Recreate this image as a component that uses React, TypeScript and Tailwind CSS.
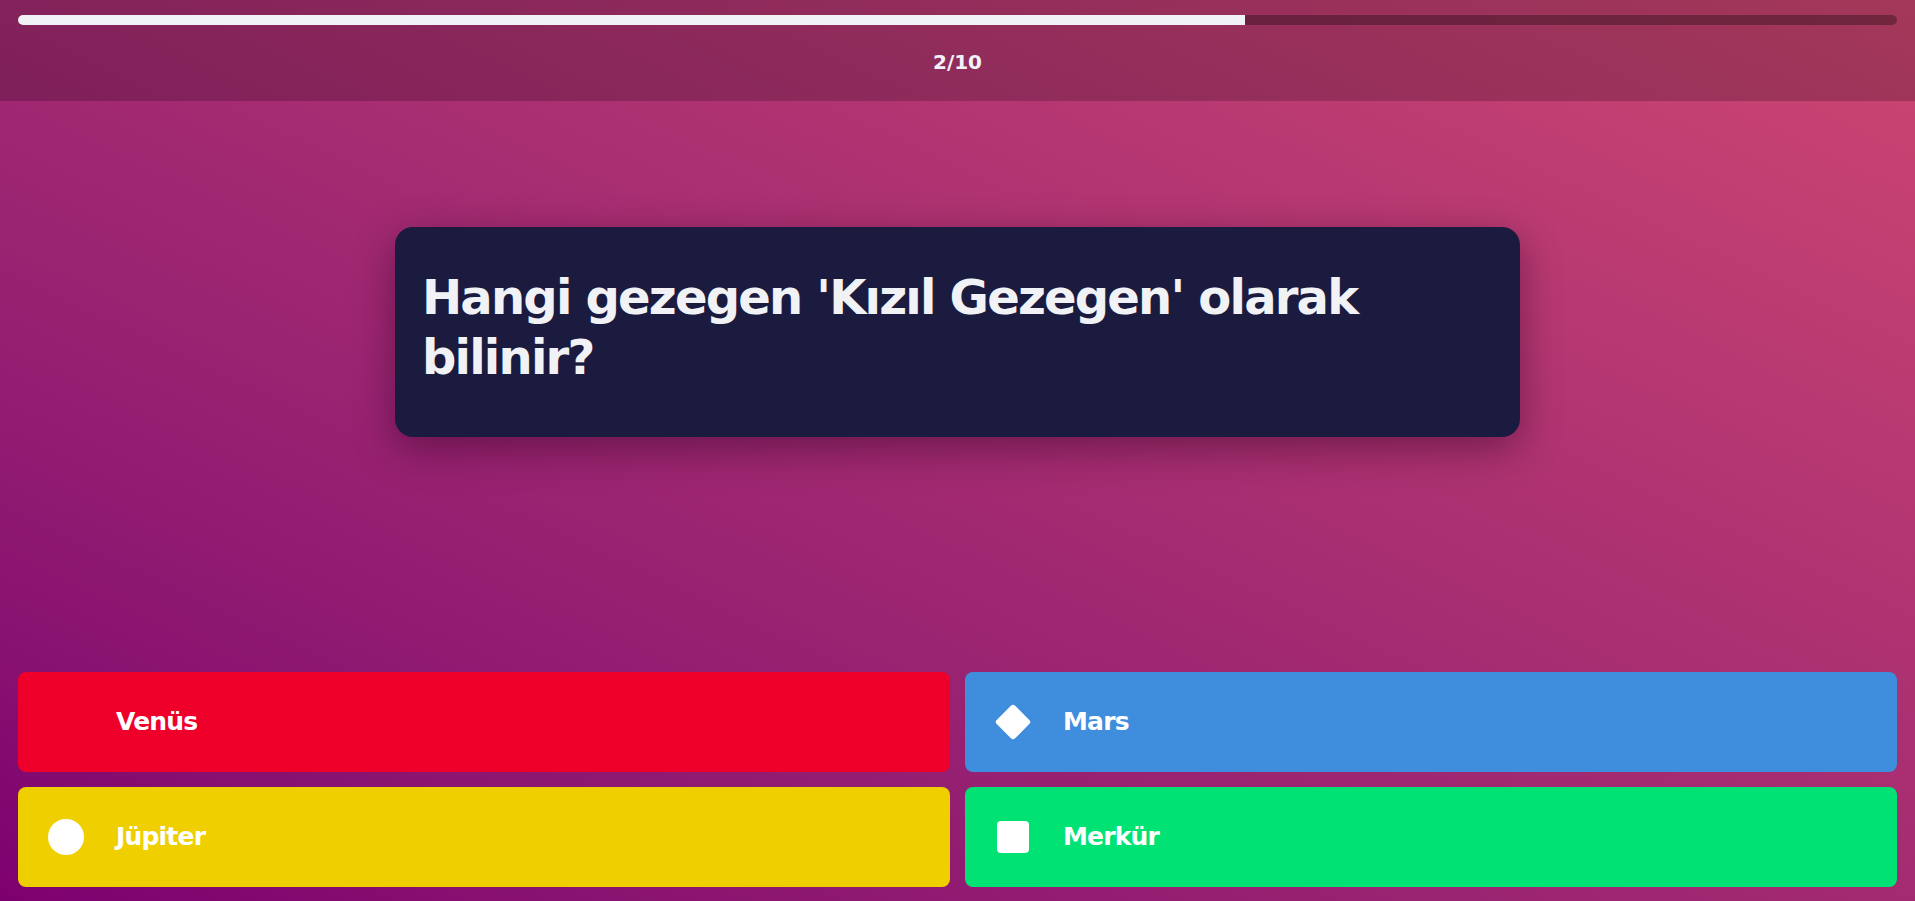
import React from "react";

const answers = [
  { text: "Venüs", bg: "bg-[#ee002b]", shape: "none" },
  { text: "Mars", bg: "bg-[#3f8ede]", shape: "diamond" },
  { text: "Jüpiter", bg: "bg-[#efcf00]", shape: "circle" },
  { text: "Merkür", bg: "bg-[#00e274]", shape: "square" },
];

function Shape({ shape }: { shape: string }) {
  if (shape === "circle") {
    return <div className="w-[36px] h-[36px] rounded-full bg-white" />;
  }
  if (shape === "diamond") {
    return <div className="w-[26px] h-[26px] rotate-45 rounded-[3px] bg-white" />;
  }
  if (shape === "square") {
    return <div className="w-[32px] h-[32px] rounded-[4px] bg-white" />;
  }
  // the triangle of the first answer doesn't show in the screenshot
  return null;
}

export default function App() {
  return (
    <div
      className="h-screen flex flex-col bg-linear-to-tr from-[#7d006f] to-[#cd4671] text-[#f1f2f6]"
      style={{ fontFamily: "'DejaVu Sans', 'Noto Sans', sans-serif" }}
    >
      {/* Top bar: timer + counter */}
      <div className="h-[101px] bg-black/20 px-[18px] pt-[15px] flex flex-col">
        <div className="h-[10px] w-full rounded-full bg-black/30 overflow-hidden">
          <div className="h-full w-[65.3%] bg-[#f1f2f6]" />
        </div>
        <p className="mt-[23px] text-center text-[20px] leading-7 font-bold">2/10</p>
      </div>

      {/* Question */}
      <div className="flex-1 pt-[126px]">
        <div className="mx-auto w-[1125px] rounded-[18px] bg-[#1b1b3f] pl-[27px] pr-[27px] pt-[40px] pb-[50px] shadow-[0_12px_40px_rgba(40,0,30,0.45)]">
          <h1 className="text-[48px] leading-[60px] font-bold tracking-[-1.8px]">
            Hangi gezegen 'Kızıl Gezegen' olarak bilinir?
          </h1>
        </div>
      </div>

      {/* Answers */}
      <div className="grid grid-cols-2 gap-[15px] px-[18px] pb-[14px]">
        {answers.map((a) => (
          <button
            key={a.text}
            className={`${a.bg} h-[100px] rounded-lg flex items-center pl-[30px] gap-[32px] text-white text-left`}
          >
            <div className="w-[36px] h-[36px] flex items-center justify-center">
              <Shape shape={a.shape} />
            </div>
            <span className="text-[25px] font-bold tracking-[-0.8px]">{a.text}</span>
          </button>
        ))}
      </div>
    </div>
  );
}
